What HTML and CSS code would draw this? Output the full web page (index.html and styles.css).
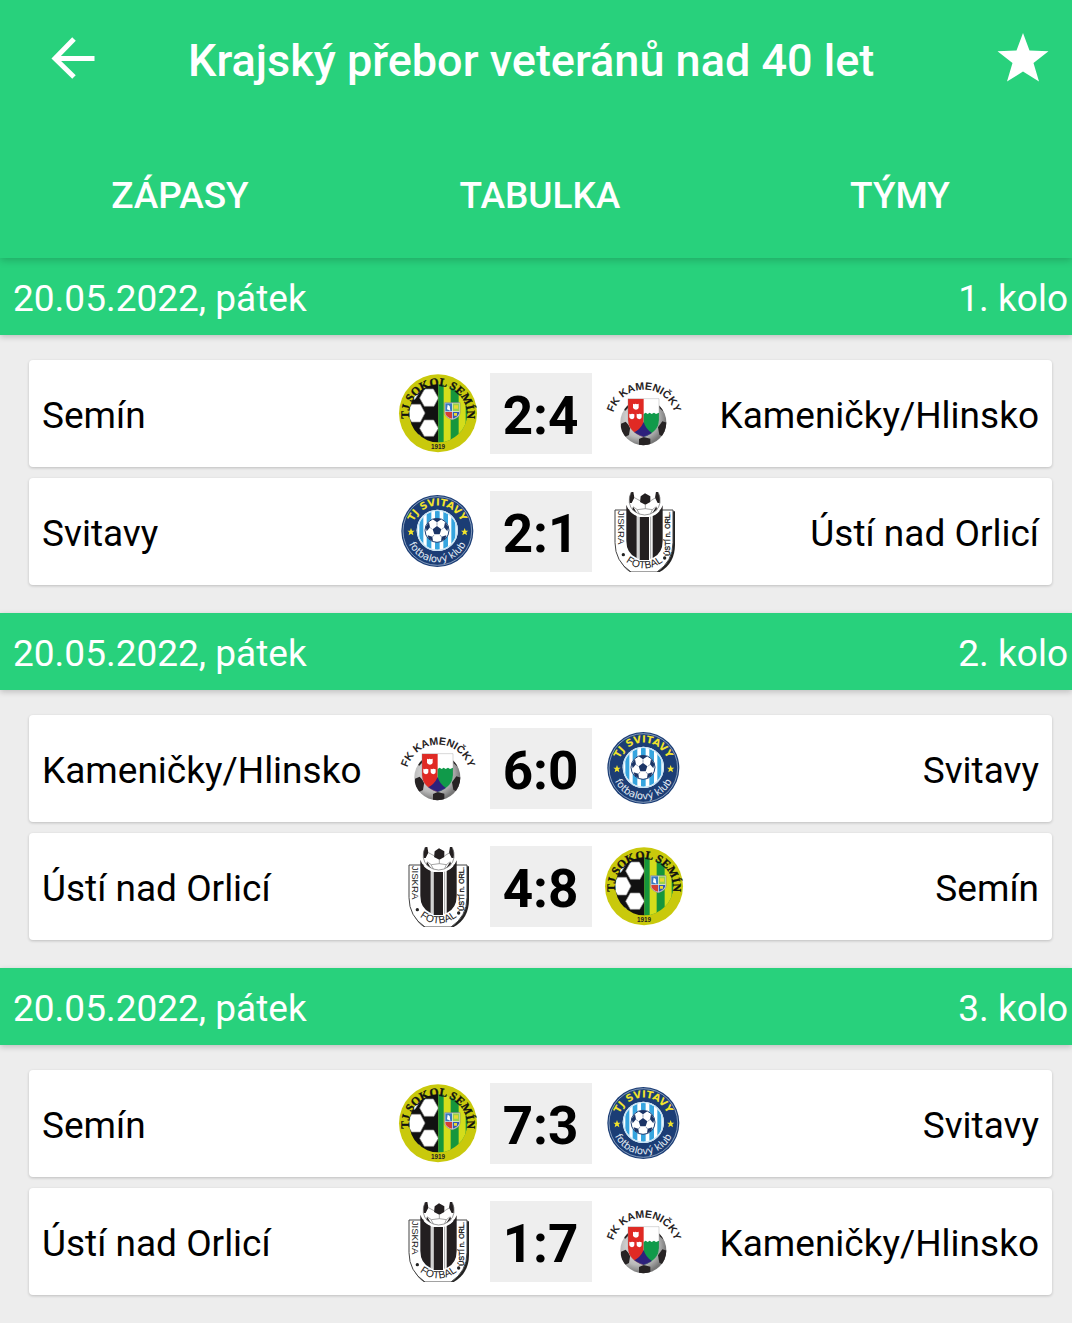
FILE: index.html
```html
<!DOCTYPE html>
<html lang="cs">
<head>
    <meta charset="UTF-8">
    <meta name="viewport" content="width=device-width, initial-scale=1.0">
    <title>Krajský přebor veteránů nad 40 let</title>
    <link rel="stylesheet" href="styles.css">
</head>
<body>

    <!-- Znaky klubů -->
    <svg class="sprites" width="0" height="0" aria-hidden="true">
        <defs>
            <clipPath id="semin-clip"><circle cx="142" cy="142" r="87"/></clipPath>
            <clipPath id="svitavy-clip"><circle cx="139" cy="139" r="58"/></clipPath>
            <clipPath id="kamenicky-clip"><circle cx="139" cy="169" r="69"/></clipPath>
            <clipPath id="kamenicky-shield"><path d="M93 98h93v64q0 36-46 51q-47-15-47-51z"/></clipPath>
            <clipPath id="usti-clip"><circle cx="143" cy="47" r="46"/></clipPath>
            <radialGradient id="ball-shade" cx="0.4" cy="0.4" r="0.6">
                <stop offset="0" stop-color="#f4f4f4"/>
                <stop offset="0.7" stop-color="#b9b9b9"/>
                <stop offset="1" stop-color="#777"/>
            </radialGradient>
            <path id="semin-arc" d="M54 147a87 87 0 0 1 174 0"/>
            <path id="kamenicky-arc" d="M46 166a95 95 0 0 1 190 0"/>
            <path id="svitavy-arc-top" d="M62 142a77 77 0 0 1 154 0"/>
            <path id="svitavy-arc-bottom" d="M45 141a94 94 0 0 0 188 0"/>
            <path id="usti-arc" d="M54 165a88 88 0 0 0 176 0"/>

            <symbol id="semin" viewBox="21 24 240 240">
                <circle cx="141" cy="142" r="117" fill="#c9c90c"/>
                <g clip-path="url(#semin-clip)">
                    <path fill="#111" d="M50 50h92v184H50z"/>
                    <g fill="#fff" stroke="#999" stroke-width="2">
                        <path d="M101 69h26l15 27-13 25h-29L86 96z"/>
                        <path d="M62 115l26 0 14 26-14 27H62l-16-27z"/>
                        <path d="M100 162h28l14 25-14 24h-28l-14-24z"/>
                        <path d="M62 207h24l13 24-10 20H50z"/>
                        <path d="M72 70l14 0 0 8-14 22-30 0z"/>
                    </g>
                    <path fill="#15963c" d="M142 50h90v184h-90z"/>
                    <path fill="#d4dd1b" d="M158 50h21v184h-21zM203 50h21v184h-21z"/>
                </g>
                <path fill="#e8eef2" stroke="#888" stroke-width="2" d="M161 110h46v30q0 14-23 21q-23-7-23-21z"/>
                <path fill="#3878c0" d="M163 112h20v24h-20z"/>
                <path fill="#9ad04c" d="M185 112h20v24h-20z"/>
                <path fill="#d33f35" d="M163 138h20v20q-20-6-20-18z"/>
                <path fill="#3558b0" d="M185 138h20q0 14-20 20z"/>
                <path fill="#fff" d="M170 116l6 4 2 14-10-4z"/>
                <path fill="#e9d934" d="M189 118h12v10h-12zM189 141h9v8h-9z"/>
                <text class="crest-serif" font-size="35" fill="#111" stroke="#111" text-anchor="middle"><textPath href="#semin-arc" startOffset="50%">TJ SOKOL SEMÍN</textPath></text>
                <text class="crest-sans" font-size="19" fill="#222" x="141" y="248" text-anchor="middle">1919</text>
            </symbol>

            <symbol id="kamenicky" viewBox="21 24 240 240">
                <circle cx="139" cy="169" r="69" fill="url(#ball-shade)"/>
                <g clip-path="url(#kamenicky-clip)" fill="#272324">
                    <path d="M112 88h58l-10 16h-42zM72 173l14-6 14 16-4 24-12 6-14-20zM210 170l-14-4-13 18 4 22 12 6 14-20zM126 219l14-6 20 5v24h-34zM78 124l12-15 6 14-12 12zM200 122l-14-13 2 18 12 10z"/>
                </g>
                <g clip-path="url(#kamenicky-shield)">
                    <path fill="#fff" d="M90 95h100v120H90z"/>
                    <path fill="#e02a24" d="M90 95h50v120H90z"/>
                    <path fill="#109a4a" d="M140 144l6-4 6 4 6-4 6 4 7-4 6 4 10-4v75h-47z"/>
                    <path fill="#2d217c" d="M140 168q6 22 26 34v20h-60v-20q24-10 34-34z"/>
                </g>
                <path fill="none" stroke="#888" d="M93 98h93v64q0 36-46 51q-47-15-47-51z"/>
                <path fill="#fff" d="M108 113l4 2 4-2 4 2 5-2v12q0 4-8 6q-8-2-9-6zM97 143l4 2 4-2 7 2v9q0 4-7 6q-7-2-8-6zM119 143l4 2 4-2 7 2v9q0 4-7 6q-7-2-8-6z"/>
                <text class="crest-sans" font-size="32" fill="#272324" text-anchor="middle"><textPath href="#kamenicky-arc" startOffset="50%">FK KAMENIČKY</textPath></text>
            </symbol>

            <symbol id="svitavy" viewBox="21 24 240 240">
                <circle cx="139" cy="141" r="108" fill="#1b3d75"/>
                <circle cx="139" cy="141" r="103" fill="none" stroke="#b9cbe0" stroke-width="2"/>
                <circle cx="139" cy="139" r="62" fill="#fff"/>
                <g clip-path="url(#svitavy-clip)">
                    <path fill="#36a5df" d="M85 78h12v122H85zM107 78h14v122h-14zM132 78h14v122h-14zM157 78h14v122h-14zM181 78h12v122h-12z"/>
                </g>
                <circle cx="139" cy="139" r="60" fill="none" stroke="#c6e3f4" stroke-width="4"/>
                <circle cx="138" cy="139" r="36" fill="#fff" stroke="#1d3e73" stroke-width="3"/>
                <path fill="#1b3567" d="M138 126l13 10-5 15h-16l-5-15zM125 106q13-5 26 0l-13 9zM104 128l10-13 3 15-10 12zM172 128l-10-13-3 15 10 12zM113 164l-3-10 14 4 2 14zM163 164l3-10-14 4-2 14z"/>
                <path fill="none" stroke="#5d7296" stroke-width="2" d="M138 115v10M117 130l6 6M159 130l-6 6M129 153l-5 6M147 153l5 6"/>
                <path fill="#f1e32c" d="M60 132l3 8h8l-6 5 2 9-7-5-7 5 2-9-6-5h8zM221 132l3 8h8l-6 5 2 9-7-5-7 5 2-9-6-5h8z"/>
                <text class="crest-wide" font-size="30" font-weight="700" fill="#f1e32c" text-anchor="middle"><textPath href="#svitavy-arc-top" startOffset="50%">TJ SVITAVY</textPath></text>
                <text class="crest-wide" font-size="30" fill="#e4edf6" text-anchor="middle"><textPath href="#svitavy-arc-bottom" startOffset="50%">fotbalový klub</textPath></text>
            </symbol>

            <symbol id="usti" viewBox="21 24 240 240">
                <path fill="#222" d="M60 82h174v100q0 56-46 82H99q-39-26-39-82z"/>
                <path fill="#fff" stroke="#444" stroke-width="3" d="M54 78h174v98q0 56-48 88h-78q-48-32-48-88z"/>
                <path fill="#231f20" d="M88 62q8 24 31 34v126q-31-14-31-52zM128 99h28v129h-28zM167 96q21-8 30-32v106q0 38-30 52z"/>
                <path fill="none" stroke="#777" stroke-width="2" d="M123 98v126M161 98v126"/>
                <path fill="none" stroke="#fff" stroke-width="7" d="M93 36q-4 58 50 59q54-1 50-59"/>
                <g clip-path="url(#usti-clip)">
                    <path fill="#fff" d="M90 0h110v98H90z"/>
                    <path fill="#231f20" d="M131 37l13-9 16 9 0 17-15 8-16-8zM96 20l13 3 3 18-8 16-9 0zM190 20l-13 3-3 18 8 16 9 0zM104 82l4-14 14 22zM182 82l-4-14-14 22z"/>
                    <path fill="none" stroke="#777" stroke-width="2" d="M112 41l19 10M160 51l16-10M145 62v12M145 74l-24 3-13-9M145 74l21 3 12-9M120 77l8 14M166 77l-6 14"/>
                </g>
                <path fill="none" stroke="#666" stroke-width="2" d="M102 25q-14 34 8 56q33 24 66 0q22-22 8-56"/>
                <text class="crest-light" font-size="29" fill="#222" transform="translate(62 80) rotate(90)">JISKRA</text>
                <text class="crest-light" font-size="22" fill="#222" stroke="#222" transform="translate(219 216) rotate(-90)">ÚSTÍ n. ORL.</text>
                <text class="crest-light" font-size="31" fill="#222" text-anchor="middle"><textPath href="#usti-arc" startOffset="50%">FOTBAL</textPath></text>
                <circle cx="79" cy="212" r="5" fill="#222"/>
                <circle cx="203" cy="222" r="5" fill="#222"/>
            </symbol>
        </defs>
    </svg>

    <header class="header">
        <div class="topbar">
            <button class="icon-button" type="button" aria-label="Zpět">
                <svg viewBox="0 0 60 60" fill="none" stroke="#fff" stroke-width="5"><path d="M31 9L12 28.500L31 47M13 28.500H51.500"/></svg>
            </button>
            <h1 class="title">Krajský přebor veteránů nad 40 let</h1>
            <button class="icon-button" type="button" aria-label="Oblíbené">
                <svg viewBox="0 0 60 60" fill="#fff"><path d="M30 3l6.500 17.500 19 .7-15 11.800 5.500 18.500L30 41.500 14 51.500l5.500-18.500-15-11.800 19-.7z"/></svg>
            </button>
        </div>
        <nav class="tabs">
            <a class="tab" href="#zapasy">ZÁPASY</a>
            <a class="tab" href="#tabulka">TABULKA</a>
            <a class="tab" href="#tymy">TÝMY</a>
        </nav>
    </header>

    <main id="zapasy">
        <section>
            <h2 class="round"><span>20.05.2022, pátek</span><span>1. kolo</span></h2>
            <ul class="matches">
                <li class="match">
                    <span class="team">Semín</span>
                    <svg class="crest"><use href="#semin"/></svg>
                    <strong class="score">2:4</strong>
                    <svg class="crest"><use href="#kamenicky"/></svg>
                    <span class="team away">Kameničky/Hlinsko</span>
                </li>
                <li class="match">
                    <span class="team">Svitavy</span>
                    <svg class="crest"><use href="#svitavy"/></svg>
                    <strong class="score">2:1</strong>
                    <svg class="crest"><use href="#usti"/></svg>
                    <span class="team away">Ústí nad Orlicí</span>
                </li>
            </ul>
        </section>

        <section>
            <h2 class="round"><span>20.05.2022, pátek</span><span>2. kolo</span></h2>
            <ul class="matches">
                <li class="match">
                    <span class="team">Kameničky/Hlinsko</span>
                    <svg class="crest"><use href="#kamenicky"/></svg>
                    <strong class="score">6:0</strong>
                    <svg class="crest"><use href="#svitavy"/></svg>
                    <span class="team away">Svitavy</span>
                </li>
                <li class="match">
                    <span class="team">Ústí nad Orlicí</span>
                    <svg class="crest"><use href="#usti"/></svg>
                    <strong class="score">4:8</strong>
                    <svg class="crest"><use href="#semin"/></svg>
                    <span class="team away">Semín</span>
                </li>
            </ul>
        </section>

        <section>
            <h2 class="round"><span>20.05.2022, pátek</span><span>3. kolo</span></h2>
            <ul class="matches">
                <li class="match">
                    <span class="team">Semín</span>
                    <svg class="crest"><use href="#semin"/></svg>
                    <strong class="score">7:3</strong>
                    <svg class="crest"><use href="#svitavy"/></svg>
                    <span class="team away">Svitavy</span>
                </li>
                <li class="match">
                    <span class="team">Ústí nad Orlicí</span>
                    <svg class="crest"><use href="#usti"/></svg>
                    <strong class="score">1:7</strong>
                    <svg class="crest"><use href="#kamenicky"/></svg>
                    <span class="team away">Kameničky/Hlinsko</span>
                </li>
            </ul>
        </section>
    </main>

</body>
</html>
```

FILE: styles.css
```css
* {
    box-sizing: border-box;
}

body {
    margin: 0;
    background: #ededed;
    color: #000;
    font-family: Roboto, "Liberation Sans", sans-serif;
    font-size: 37px;
    line-height: 45px;
    overflow-x: hidden;
}

.sprites {
    position: absolute;
}

/* Hlavička */
.header {
    position: relative;
    background: #28d17c;
    color: #fff;
    box-shadow: 0 2px 8px rgba(0, 0, 0, 0.2);
}

.topbar {
    display: flex;
    align-items: center;
    height: 120px;
    padding: 0 19px 0 43px;
}

.icon-button {
    width: 60px;
    height: 60px;
    padding: 0;
    border: 0;
    background: none;
    cursor: pointer;
}

.icon-button svg {
    display: block;
    width: 60px;
    height: 60px;
}

.title {
    flex: 1;
    margin: 0;
    padding: 2px 0 0 85px;
    font-size: 45px;
    line-height: 54px;
    font-weight: 500;
}

.tabs {
    display: flex;
    margin-right: -8px;
    padding-top: 14px;
}

.tab {
    flex: 1;
    color: #fff;
    font-weight: 500;
    line-height: 124px;
    text-align: center;
    text-decoration: none;
}

/* Pruh s datem a kolem */
.round {
    display: flex;
    justify-content: space-between;
    margin: 0;
    padding: 18px 4px 14px 13px;
    background: #28d17c;
    box-shadow: 0 2px 6px rgba(0, 0, 0, 0.2);
    color: #fff;
    font-size: 37px;
    font-weight: 400;
}

/* Zápasy */
.matches {
    display: flex;
    flex-direction: column;
    gap: 11px;
    margin: 0;
    padding: 25px 20px 28px 29px;
    list-style: none;
}

.match {
    display: flex;
    align-items: center;
    gap: 12px;
    padding: 13px;
    border-radius: 4px;
    background: #fff;
    box-shadow: 0 1px 3px rgba(0, 0, 0, 0.2);
}

.team {
    flex: 1 1 0;
    padding-top: 4px;
    white-space: nowrap;
}

.away {
    text-align: right;
}

.crest {
    flex: none;
    width: 80px;
    height: 80px;
}

.score {
    flex: none;
    width: 102px;
    padding-top: 5px;
    background: #eee;
    font-size: 53px;
    font-weight: 700;
    line-height: 76px;
    text-align: center;
}

.crest-serif {
    font-family: "Liberation Serif", serif;
    font-weight: 700;
}

.crest-sans {
    font-family: "Liberation Sans", sans-serif;
    font-weight: 700;
}

.crest-light {
    font-family: "Liberation Sans", sans-serif;
}

.crest-wide {
    font-family: "DejaVu Sans", sans-serif;
}
```
